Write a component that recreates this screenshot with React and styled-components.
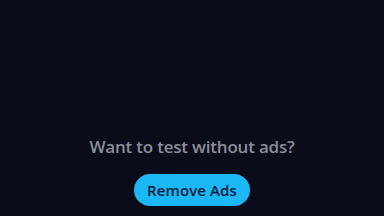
import React from 'react'
import styled, { createGlobalStyle } from 'styled-components'

const Global = createGlobalStyle`
  html, body {
    margin: 0;
    padding: 0;
    background: #0a0c1a;
  }
`

const Screen = styled.main`
  width: 384px;
  height: 216px;
  background: #0a0c1a;
  display: flex;
  flex-direction: column;
  align-items: center;
  justify-content: flex-end;
  padding-bottom: 10px;
  box-sizing: border-box;
  font-family: "Open Sans", "Noto Sans", sans-serif;
`

const Prompt = styled.p`
  margin: 0 0 16px;
  color: #8b8e99;
  font-size: 17px;
  font-weight: 600;
  line-height: 22px;
  letter-spacing: -0.2px;
`

const Button = styled.button`
  border: none;
  border-radius: 16px;
  background: #1cb8f5;
  color: #0b1a36;
  font-family: inherit;
  font-size: 15px;
  font-weight: 600;
  height: 32px;
  padding: 0 13px;
  letter-spacing: 0.1px;
  cursor: pointer;
`

const App = () => (
  <>
    <Global />
    <Screen>
      <Prompt>Want to test without ads?</Prompt>
      <Button>Remove Ads</Button>
    </Screen>
  </>
)

export default App
